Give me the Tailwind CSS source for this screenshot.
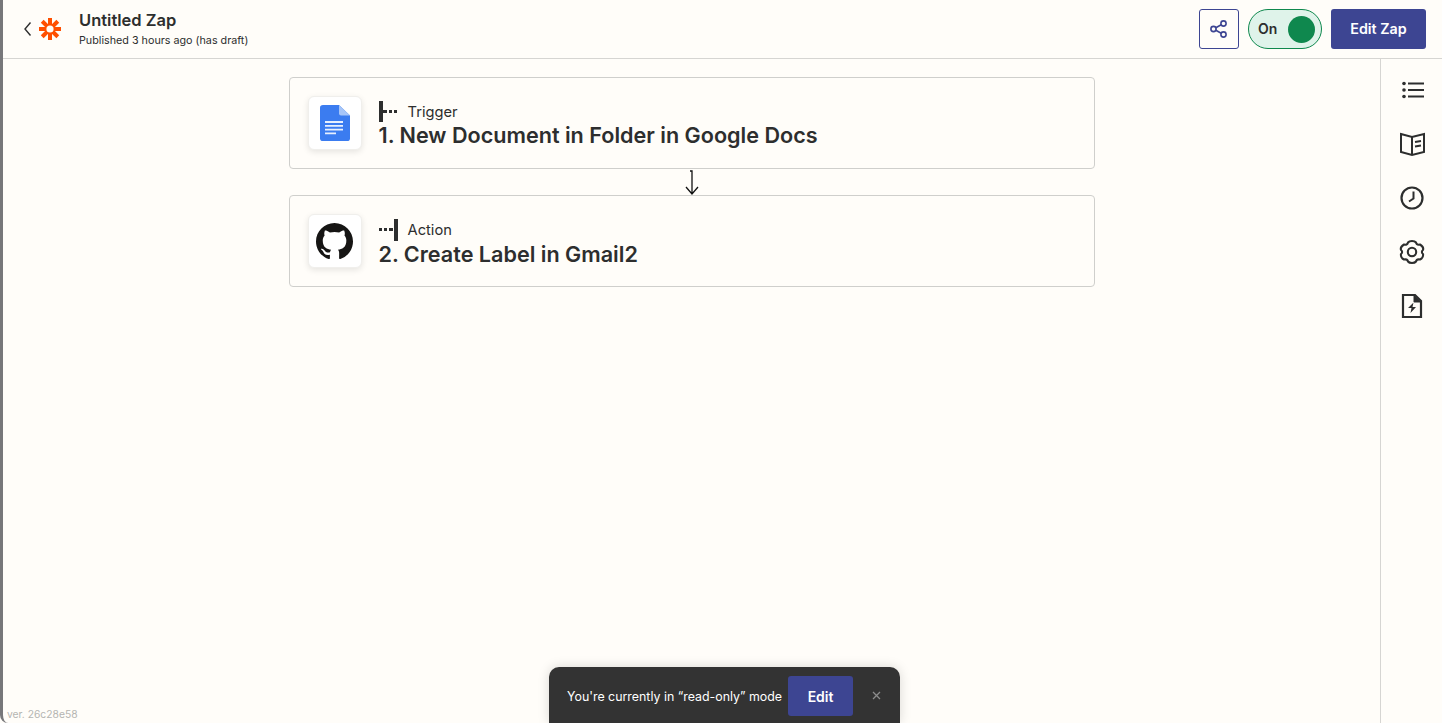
<!DOCTYPE html>
<html lang="en">
  <head>
    <meta charset="UTF-8" />
    <meta name="viewport" content="width=device-width, initial-scale=1.0" />
    <title>Untitled Zap</title>
    <script src="https://cdn.jsdelivr.net/npm/@tailwindcss/browser@4"></script>
  </head>
  <body class="h-screen overflow-hidden bg-[#fffdf9] text-[#2d2e2e] font-['Inter',sans-serif]">
    <div class="relative flex flex-col h-[723px] border-l-[3px] border-[#77777a] rounded-bl-[8px]">
      <!-- header -->
      <header class="flex items-center justify-between h-[59px] border-b border-[#d6d5d2] pl-[20px] pr-[16px] shrink-0">
        <div class="flex items-center">
          <svg class="w-[10px] h-[16px]" viewBox="0 0 10 16" fill="none" stroke="#2d2e2e" stroke-width="1.4"><path d="M7.5 1.5 L2 8 L7.5 14.5" /></svg>
          <svg class="w-[22px] h-[22px] ml-[6px]" viewBox="0 0 22 22" fill="#ff4f00">
            <rect x="9" y="0" width="4" height="22" />
            <rect x="0" y="9" width="22" height="4" />
            <rect x="9" y="0" width="4" height="22" transform="rotate(45 11 11)" />
            <rect x="9" y="0" width="4" height="22" transform="rotate(-45 11 11)" />
            <circle cx="11" cy="11" r="3.6" fill="#fffdf9" />
          </svg>
          <div class="ml-[18px] flex flex-col">
            <div class="text-[16.5px] leading-[20px] font-semibold">Untitled Zap</div>
            <div class="text-[10.75px] leading-[16px] mt-[3px]">Published 3 hours ago (has draft)</div>
          </div>
        </div>
        <div class="flex items-center gap-[9px]">
          <button class="w-[40px] h-[40px] flex items-center justify-center border border-[#3d4592] rounded-[3px]">
            <svg class="w-[20px] h-[20px]" viewBox="0 0 20 20" fill="none" stroke="#3d4592" stroke-width="1.6">
              <circle cx="4.5" cy="10" r="2.6" />
              <circle cx="14.5" cy="4.5" r="2.6" />
              <circle cx="14.5" cy="15.5" r="2.6" />
              <path d="M6.8 8.8 L12.2 5.8 M6.8 11.2 L12.2 14.2" />
            </svg>
          </button>
          <div class="w-[74px] h-[40px] flex items-center justify-between pl-[9px] pr-[6px] rounded-full border border-[#0f884e] bg-[#dff3ea]">
            <span class="text-[14px] font-semibold pb-[2px]">On</span>
            <span class="w-[27px] h-[27px] rounded-full bg-[#0f884e]"></span>
          </div>
          <button class="w-[95px] h-[40px] pb-[1px] rounded-[3px] bg-[#3d4592] text-white text-[14.3px] font-semibold">Edit Zap</button>
        </div>
      </header>

      <div class="flex flex-1 min-h-0">
        <!-- canvas -->
        <main class="flex-1 flex flex-col items-center pt-[18px]">
          <div class="w-[806px] h-[92px] flex items-center pl-[18px] border border-[#cfcfcc] rounded-[4px]">
            <div class="w-[54px] h-[54px] flex items-center justify-center bg-white rounded-[6px] border border-[#f0efec] shadow-[0_2px_6px_rgba(0,0,0,0.1)]">
              <svg class="w-[30px] h-[36px]" viewBox="0 0 30 38" preserveAspectRatio="none">
                <path d="M3 0 H19 L30 11 V35 a3 3 0 0 1 -3 3 H3 a3 3 0 0 1 -3 -3 V3 a3 3 0 0 1 3 -3z" fill="#3b7cf0" />
                <path d="M19 0 L30 11 H21 a2 2 0 0 1 -2 -2z" fill="#a6c5f8" />
                <path d="M5 17 H23 V19 H5z M5 21 H23 V23 H5z M5 25 H23 V27 H5z M5 29 H16 V31 H5z" fill="#e8f0fe" />
              </svg>
            </div>
            <div class="ml-[17px] mt-[4px]">
              <div class="flex items-center h-[22px]">
                <svg class="w-[20px] h-[22px]" viewBox="0 0 20 22" fill="#2d2e2e">
                  <rect x="0" y="0" width="4" height="21" />
                  <rect x="4" y="9" width="4" height="3" />
                  <rect x="10" y="9" width="3" height="3" />
                  <rect x="15" y="9" width="3" height="3" />
                </svg>
                <span class="ml-[9px] text-[14.7px] leading-[20px]">Trigger</span>
              </div>
              <div class="-mt-[2px] text-[21.6px] leading-[28px] font-semibold">1. New Document in Folder in Google Docs</div>
            </div>
          </div>

          <div class="h-[26px] flex items-center justify-center">
            <svg class="w-[16px] h-[26px]" viewBox="0 0 16 26" fill="none" stroke="#111" stroke-width="1.3"><path d="M6 2 H8 V25 M2 18 L8 25 L14 18" /></svg>
          </div>

          <div class="w-[806px] h-[92px] flex items-center pl-[18px] border border-[#cfcfcc] rounded-[4px]">
            <div class="w-[54px] h-[54px] flex items-center justify-center bg-white rounded-[6px] border border-[#f0efec] shadow-[0_2px_6px_rgba(0,0,0,0.1)]">
              <svg class="w-[37px] h-[37px]" viewBox="0 0 16 16" fill="#161514">
                <path d="M8 0C3.58 0 0 3.58 0 8c0 3.54 2.29 6.53 5.47 7.59.4.07.55-.17.55-.38 0-.19-.01-.82-.01-1.49-2.01.37-2.53-.49-2.69-.94-.09-.23-.48-.94-.82-1.13-.28-.15-.68-.52-.01-.53.63-.01 1.08.58 1.23.82.72 1.21 1.87.87 2.33.66.07-.52.28-.87.51-1.07-1.78-.2-3.64-.89-3.64-3.95 0-.87.31-1.59.82-2.15-.08-.2-.36-1.02.08-2.12 0 0 .67-.21 2.2.82.64-.18 1.32-.27 2-.27s1.36.09 2 .27c1.53-1.04 2.2-.82 2.2-.82.44 1.1.16 1.92.08 2.12.51.56.82 1.27.82 2.15 0 3.07-1.87 3.75-3.65 3.95.29.25.54.73.54 1.48 0 1.07-.01 1.93-.01 2.2 0 .21.15.46.55.38A8.01 8.01 0 0 0 16 8c0-4.42-3.58-8-8-8z" />
              </svg>
            </div>
            <div class="ml-[17px] mt-[4px]">
              <div class="flex items-center h-[22px]">
                <svg class="w-[20px] h-[22px]" viewBox="0 0 20 22" fill="#2d2e2e">
                  <rect x="0" y="9" width="3" height="3" />
                  <rect x="5" y="9" width="3" height="3" />
                  <rect x="10" y="9" width="4" height="3" />
                  <rect x="15" y="0" width="4" height="22" />
                </svg>
                <span class="ml-[9px] text-[14.7px] leading-[20px]">Action</span>
              </div>
              <div class="-mt-[1px] text-[21.6px] leading-[28px] font-semibold">2. Create Label in Gmail2</div>
            </div>
          </div>
        </main>

        <!-- right rail -->
        <aside class="w-[62px] shrink-0 flex flex-col items-center border-l border-[#d6d5d2] pt-[18px] gap-[28px]">
          <svg class="w-[26px] h-[26px]" viewBox="0 0 26 26" fill="#2d2e2e">
            <circle cx="5" cy="6.5" r="1.8" /><rect x="9" y="5.5" width="16" height="2" />
            <circle cx="5" cy="13" r="1.8" /><rect x="9" y="12" width="16" height="2" />
            <circle cx="5" cy="19.5" r="1.8" /><rect x="9" y="18.5" width="16" height="2" />
          </svg>
          <svg class="w-[26px] h-[26px]" viewBox="0 0 26 26" fill="none" stroke="#2d2e2e" stroke-width="2">
            <path d="M2 3 L13 6 L25 3 V21 L13 24 L2 21z M13 6 V24" />
            <path d="M16 11 L22 10 M16 15.5 L22 14.5" />
          </svg>
          <svg class="w-[26px] h-[26px]" viewBox="0 0 26 26" fill="none" stroke="#2d2e2e" stroke-width="2.2">
            <circle cx="13" cy="13" r="10.5" />
            <path d="M14.5 6.5 V13.5 L10 16.5" stroke-width="2" />
          </svg>
          <svg class="w-[26px] h-[26px]" viewBox="0 0 26 26" fill="none" stroke="#2d2e2e" stroke-width="2.1" stroke-linejoin="round">
            <path d="M9 3.5 C10.5 1.5 15.5 1.5 17 3.5 C17.5 5.5 19 6 21 5.5 C23.5 7 24.5 9.5 24 11 C22.5 12 22.5 14 24 15 C24.5 17 23 19.5 21 20.5 C19 20 17.5 20.5 17 22.5 C15.5 24.5 10.5 24.5 9 22.5 C8.5 20.5 7 20 5 20.5 C3 19.5 1.5 17 2 15 C3.5 14 3.5 12 2 11 C1.5 9.5 2.5 7 5 5.5 C7 6 8.5 5.5 9 3.5z" />
            <circle cx="13" cy="13" r="4.2" />
          </svg>
          <svg class="w-[26px] h-[26px]" viewBox="0 0 26 26" fill="none" stroke="#2d2e2e" stroke-width="2.2">
            <path d="M4 2 H16 L22 8 V24 H4z" />
            <path d="M15 2 V9 H22" fill="#2d2e2e" stroke-width="1" />
            <path d="M14.5 9.5 L9 15 H12.5 L11.5 20 L17 14 H13.5z" fill="#2d2e2e" stroke="none" />
          </svg>
        </aside>
      </div>

      <span class="absolute left-[4px] bottom-[2px] text-[10.3px] leading-[14px] text-[#b5b5b2]">ver. 26c28e58</span>

      <!-- read-only toast -->
      <div class="absolute left-[546px] bottom-0 w-[351px] h-[56px] flex items-start pt-[9px] pl-[18px] bg-[#333333] rounded-t-[10px] shadow-[0_0_12px_rgba(0,0,0,0.15)]">
        <span class="text-[12.4px] leading-[41px] text-white">You're currently in “read-only” mode</span>
        <button class="ml-[6px] w-[65px] h-[40px] rounded-[3px] bg-[#3d4592] text-white text-[14px] font-semibold">Edit</button>
        <svg class="ml-[19px] mt-[15px] w-[9px] h-[9px]" viewBox="0 0 9 9" stroke="#8c8c8c" stroke-width="1.3"><path d="M1 1 L8 8 M8 1 L1 8" /></svg>
      </div>
    </div>
  </body>
</html>
